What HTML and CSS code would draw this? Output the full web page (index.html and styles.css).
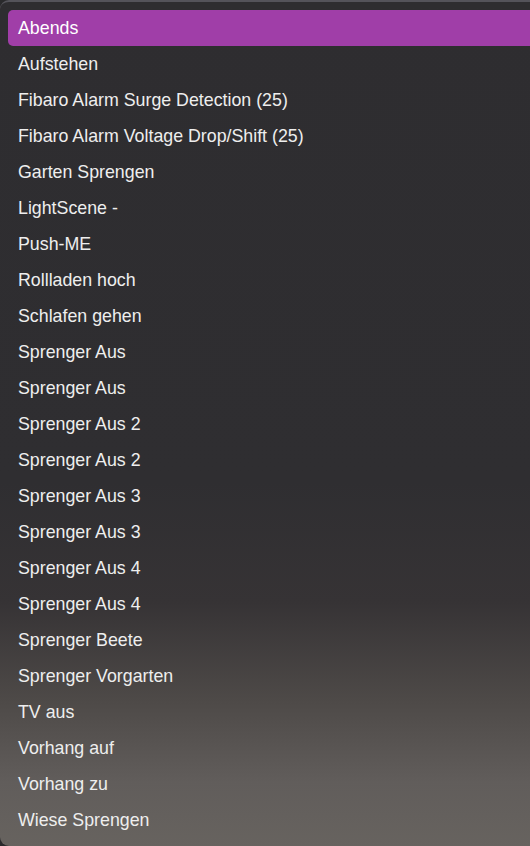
FILE: index.html
```html
<!DOCTYPE html>
<html>
<head>
    <title>Szenen</title>
    <link rel="stylesheet" href="styles.css">
</head>
<body>
    <div class="menu">
        <div class="item active">Abends</div>
        <div class="item">Aufstehen</div>
        <div class="item">Fibaro Alarm Surge Detection (25)</div>
        <div class="item">Fibaro Alarm Voltage Drop/Shift (25)</div>
        <div class="item">Garten Sprengen</div>
        <div class="item">LightScene -</div>
        <div class="item">Push-ME</div>
        <div class="item">Rollladen hoch</div>
        <div class="item">Schlafen gehen</div>
        <div class="item">Sprenger Aus</div>
        <div class="item">Sprenger Aus</div>
        <div class="item">Sprenger Aus 2</div>
        <div class="item">Sprenger Aus 2</div>
        <div class="item">Sprenger Aus 3</div>
        <div class="item">Sprenger Aus 3</div>
        <div class="item">Sprenger Aus 4</div>
        <div class="item">Sprenger Aus 4</div>
        <div class="item">Sprenger Beete</div>
        <div class="item">Sprenger Vorgarten</div>
        <div class="item">TV aus</div>
        <div class="item">Vorhang auf</div>
        <div class="item">Vorhang zu</div>
        <div class="item">Wiese Sprengen</div>
    </div>
</body>
</html>
```

FILE: styles.css
```css
html, body {
    margin: 0;
    height: 100%;
    background-color: #2a2a2c;
    overflow: hidden;
}

.menu {
    box-sizing: border-box;
    height: 846px;
    padding: 8px 0 8px 8px;
    border-top: 2px solid #54535a;
    border-radius: 9px 0 0 9px;
    background: linear-gradient(to bottom, #2e2d30 0px, #2f2e31 480px, #363335 600px, #4e4a48 700px, #615d5b 780px, #67635f 846px);
    font-family: "Liberation Sans", Arial, sans-serif;
    font-size: 17.8px;
    color: #eeeeee;
}

.item {
    height: 36px;
    line-height: 36px;
    padding-left: 10px;
    white-space: nowrap;
}

/* Selected row */
.item.active {
    background-color: #a03ea8;
    color: #ffffff;
    border-radius: 5px 0 0 5px;
}
```
